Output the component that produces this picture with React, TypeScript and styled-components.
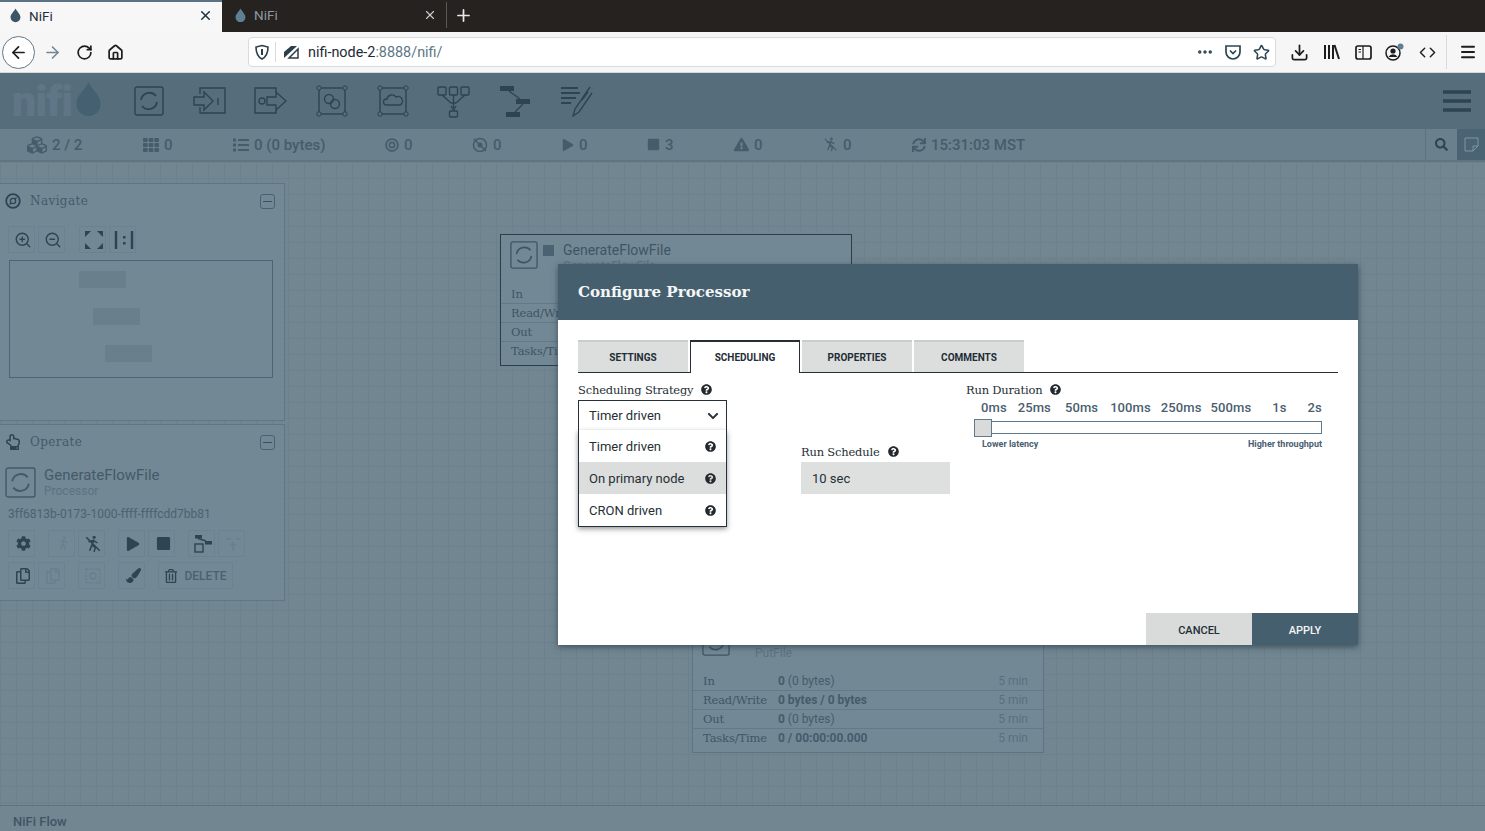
import React from 'react'
import styled, { createGlobalStyle } from 'styled-components'
import {
  ArrowLeft,
  ArrowRight,
  Code,
  Download,
  Ellipsis,
  House,
  Menu,
  Plus,
  RotateCw,
  Star,
  X,
  ZoomIn,
  ZoomOut,
} from 'lucide-react'
import {
  FaBullseye,
  FaChevronDown,
  FaCog,
  FaCubes,
  FaExclamationTriangle,
  FaList,
  FaPaintBrush,
  FaPlay,
  FaQuestionCircle,
  FaRegCopy,
  FaRegHandPointUp,
  FaRegTrashAlt,
  FaSearch,
  FaStop,
  FaSync,
  FaTh,
} from 'react-icons/fa'

const INK = '#2f4351'
const SLAB = '"DejaVu Serif", "Liberation Serif", serif'

const GlobalStyle = createGlobalStyle`
  html, body {
    margin: 0;
    height: 100%;
    overflow: hidden;
    font-family: Roboto, "Liberation Sans", sans-serif;
  }
  #root { height: 100%; }
  * { box-sizing: border-box; }
`

const Page = styled.div`
  position: relative;
  display: flex;
  flex-direction: column;
  width: 1485px;
  height: 831px;
  overflow: hidden;
`

/* browser chrome */
const TabStrip = styled.div`
  display: flex;
  height: 32px;
  flex: none;
  background: #262220;
`
const BrowserTab = styled.div<{ $active?: boolean }>`
  display: flex;
  align-items: center;
  width: ${p => (p.$active ? 222 : 225)}px;
  padding: 0 9px ${p => (p.$active ? 3 : 0)}px ${p => (p.$active ? 10 : 13)}px;
  font-size: 13.5px;
  color: ${p => (p.$active ? '#20303a' : '#8a9aa4')};
  background: ${p => (p.$active ? '#f7f7f8' : 'transparent')};
  border-top: ${p => (p.$active ? '2px solid #5a7282' : 'none')};
  border-right: ${p => (p.$active ? 'none' : '1px solid #5b5755')};
  height: ${p => (p.$active ? 32 : 26)}px;
  margin-top: ${p => (p.$active ? 0 : 2)}px;
`
const TabTitle = styled.span`
  flex: 1;
  margin-left: 8px;
`
const NewTab = styled.div`
  display: flex;
  align-items: center;
  height: 30px;
  padding-left: 7px;
  color: #e8e8e8;
`
const Toolbar = styled.div`
  display: flex;
  align-items: center;
  flex: none;
  height: 41px;
  padding-left: 2px;
  background: #f6f6f7;
  border-bottom: 1px solid #d6d8da;
  color: #1d1d1f;
`
const BackButton = styled.div`
  display: flex;
  align-items: center;
  justify-content: center;
  width: 33px;
  height: 33px;
  border: 1px solid #60788a;
  border-radius: 50%;
  background: #fff;
`
const NavButton = styled.div<{ $width: number; $muted?: boolean }>`
  display: flex;
  align-items: center;
  justify-content: center;
  flex: none;
  width: ${p => p.$width}px;
  color: ${p => (p.$muted ? '#6f8797' : '#1d1d1f')};
`
const UrlBar = styled.div`
  display: flex;
  align-items: center;
  width: 1028px;
  height: 30px;
  margin: 0 7px 0 117px;
  padding-left: 5px;
  background: #fff;
  border: 1px solid #d8dadc;
  border-radius: 4px;
`
const UrlDivider = styled.div`
  width: 1px;
  height: 20px;
  margin: 0 7px 0 5px;
  background: #d8dadc;
`
const UrlText = styled.span`
  flex: 1;
  margin-left: 9px;
  font-size: 14.4px;
  color: #1d2b35;
`
const UrlMuted = styled.span`
  color: #5d7686;
`
const ToolbarSeparator = styled.div`
  width: 1px;
  height: 34px;
  margin: 0 12px 0 3px;
  background: #d8dadc;
`

/* nifi header */
const AppHeader = styled.div`
  display: flex;
  align-items: center;
  flex: none;
  height: 56px;
  padding: 0 14px 0 12px;
  background: #566e7c;
`
const Logo = styled.div`
  display: flex;
  align-items: center;
  gap: 3px;
  width: 122px;
`
const LogoText = styled.span`
  font-size: 43px;
  font-weight: 900;
  line-height: 44px;
  letter-spacing: -0.8px;
  color: #607686;
`
const LogoDrop = styled.div`
  display: flex;
  margin-bottom: 5px;
`
const ComponentButtons = styled.div`
  display: flex;
  align-items: center;
  flex: 1;
  gap: 28.7px;
`
const ToolIcon = styled.div`
  display: flex;
  color: ${INK};
`
const StatusBar = styled.div`
  display: flex;
  align-items: center;
  flex: none;
  height: 33px;
  padding-left: 27px;
  background: #6a808d;
  border-bottom: 2px solid #5f7583;
  font-size: 15px;
  font-weight: 500;
  color: #465c6b;
`
const StatusItem = styled.div<{ $width: number }>`
  display: flex;
  align-items: center;
  gap: 5px;
  flex: none;
  width: ${p => p.$width}px;
`
const StatusSpacer = styled.div`
  flex: 1;
`
const SearchCell = styled.div<{ $dark?: boolean }>`
  display: flex;
  align-items: center;
  justify-content: center;
  height: 100%;
  width: ${p => (p.$dark ? 28 : 32)}px;
  color: ${p => (p.$dark ? '#7f95a3' : INK)};
  background: ${p => (p.$dark ? '#4b6473' : 'transparent')};
  border-left: ${p => (p.$dark ? 'none' : '1px solid #5c7281')};
`

/* canvas */
const Canvas = styled.div`
  position: relative;
  flex: 1;
  background-color: #718691;
  background-image:
    linear-gradient(#6c818c 1px, transparent 1px),
    linear-gradient(90deg, #6c818c 1px, transparent 1px);
  background-size: 16px 16px;
`
const Palettes = styled.div`
  position: absolute;
  left: -1px;
  top: 21px;
  display: flex;
  flex-direction: column;
  gap: 3px;
  width: 286px;
`
const Palette = styled.div<{ $height: number }>`
  height: ${p => p.$height}px;
  padding-left: 6px;
  background: #728894;
  border: 1px solid #5f7685;
  border-left: none;
`
const PaletteHeader = styled.div`
  display: flex;
  align-items: center;
  height: 34px;
  padding-right: 9px;
  color: ${INK};
`
const PaletteTitle = styled.span`
  flex: 1;
  margin-left: 9px;
  font-family: ${SLAB};
  font-size: 12px;
  letter-spacing: 0.4px;
  color: #445a69;
`
const CollapseBox = styled.div`
  display: flex;
  align-items: center;
  justify-content: center;
  width: 15px;
  height: 15px;
  border: 1px solid #4a6171;
  border-radius: 3px;
  &::after {
    content: '';
    width: 9px;
    height: 1px;
    background: #3a4f5d;
  }
`
const ButtonRow = styled.div<{ $top?: number }>`
  display: flex;
  margin: ${p => p.$top ?? 0}px 0 0 3px;
`
const ActionButton = styled.div<{ $gap?: number; $faded?: boolean; $wide?: boolean }>`
  display: flex;
  align-items: center;
  justify-content: center;
  gap: 6px;
  flex: none;
  width: ${p => (p.$wide ? 75 : 27)}px;
  height: 27px;
  margin-left: ${p => p.$gap ?? 3}px;
  padding-left: ${p => (p.$wide ? 0 : 3)}px;
  border: 1px solid #6c8290;
  font-size: 12px;
  font-weight: 500;
  color: ${p => (p.$faded ? '#66808f' : INK)};
  &:first-child { margin-left: 0; }
`
const ButtonLabel = styled.span`
  color: #4b6171;
`
const Birdseye = styled.div`
  display: flex;
  flex-direction: column;
  gap: 20px;
  width: 264px;
  height: 118px;
  margin: 7px 0 0 4px;
  padding-top: 10px;
  border: 1px solid #4d6474;
`
const BirdseyeNode = styled.div<{ $left: number }>`
  width: 47px;
  height: 17px;
  margin-left: ${p => p.$left}px;
  background: #697f8c;
`
const SelectionRow = styled.div`
  display: flex;
  align-items: center;
  gap: 8px;
  height: 32px;
  margin-top: 7px;
  color: #445a69;
`
const SelectionName = styled.div`
  font-size: 15px;
  line-height: 17px;
`
const SelectionType = styled.div`
  font-size: 12px;
  line-height: 14px;
  color: #5b7282;
`
const SelectionId = styled.div`
  margin: 9px 0 9px 3px;
  font-size: 12px;
  line-height: 14px;
  color: #4c6272;
`
const FlowNode = styled.div<{ $left: number; $top: number; $selected?: boolean }>`
  position: absolute;
  left: ${p => p.$left}px;
  top: ${p => p.$top}px;
  width: 352px;
  height: 132px;
  padding-top: 6px;
  background: #738895;
  border: 1px solid ${p => (p.$selected ? '#2a3d4a' : '#5d7484')};
  color: #3f5564;
`
const NodeHead = styled.div`
  display: flex;
  height: 43.5px;
  padding-left: 9px;
`
const StopMark = styled.div`
  width: 11px;
  height: 11px;
  margin: 4px 9px 0 5px;
  background: #4a6272;
`
const NodeName = styled.div`
  padding-top: 1px;
  font-size: 14px;
  line-height: 17px;
`
const NodeSub = styled.div`
  font-size: 12px;
  line-height: 14px;
  color: #5b7282;
`
const StatRow = styled.div<{ $rule?: boolean }>`
  display: flex;
  align-items: center;
  height: 19px;
  margin-top: -0.25px;
  padding: 0 15px 0 10px;
  border-top: ${p => (p.$rule ? '1px solid #62798a' : '1px solid transparent')};
  font-size: 12px;
`
const StatLabel = styled.span`
  width: 75px;
  font-family: ${SLAB};
  font-size: 11.5px;
  letter-spacing: -0.15px;
  white-space: nowrap;
`
const StatValue = styled.span`
  flex: 1;
  color: #455b6a;
`
const StatTime = styled.span`
  color: #577080;
`
const Strong = styled.b`
  font-weight: 700;
`
const Footer = styled.div`
  display: flex;
  align-items: flex-end;
  flex: none;
  height: 26px;
  padding: 0 0 2px 13px;
  background: #718691;
  border-top: 1px solid #5d7484;
  font-size: 13px;
  font-weight: 500;
  color: #3f5564;
`

/* dialog */
const Dialog = styled.div`
  position: absolute;
  left: 558px;
  top: 264px;
  display: flex;
  flex-direction: column;
  width: 800px;
  height: 381px;
  background: #fff;
  box-shadow: 0 2px 6px rgba(40, 60, 72, 0.7);
`
const DialogHeader = styled.div`
  display: flex;
  align-items: center;
  flex: none;
  height: 56px;
  padding-left: 20px;
  background: #455f6e;
  font-family: ${SLAB};
  font-size: 15.1px;
  font-weight: 700;
  color: #f4f6f7;
`
const DialogBody = styled.div`
  flex: 1;
  padding: 20px 20px 0;
`
const Tabs = styled.div`
  display: flex;
  gap: 2px;
  height: 33px;
  border-bottom: 1px solid #262f35;
`
const DialogTab = styled.div<{ $active?: boolean }>`
  display: flex;
  align-items: center;
  justify-content: center;
  width: 110px;
  height: ${p => (p.$active ? 33 : 32)}px;
  font-size: 10px;
  font-weight: 700;
  color: #1f2d36;
  background: ${p => (p.$active ? '#fff' : '#dcdddd')};
  border-top: 2px solid ${p => (p.$active ? '#262f35' : '#c9cbcc')};
  border-left: ${p => (p.$active ? '1px solid #262f35' : 'none')};
  border-right: ${p => (p.$active ? '1px solid #262f35' : 'none')};
`
const FormGrid = styled.div`
  display: grid;
  grid-template-columns: 223px 165px 356px;
  margin-top: 9px;
`
const Label = styled.div`
  display: flex;
  align-items: center;
  gap: 8px;
  height: 15px;
  font-family: ${SLAB};
  font-size: 11.5px;
  letter-spacing: -0.2px;
  color: #262f35;
`
const Help = styled(FaQuestionCircle)`
  flex: none;
  font-size: 11px;
  color: #23292e;
`
const SelectWrap = styled.div`
  position: relative;
  width: 149px;
  margin-top: 3px;
`
const SelectBox = styled.div`
  display: flex;
  align-items: center;
  justify-content: space-between;
  height: 31px;
  padding: 0 7px 0 10px;
  background: #fff;
  border: 1px solid #262f35;
  border-bottom-color: #e4e5e5;
  font-size: 13px;
  color: #262f35;
`
const Options = styled.div`
  position: absolute;
  left: 0;
  right: 0;
  top: 30px;
  background: #fff;
  border: 1px solid #262f35;
  border-top: none;
  box-shadow: 0 2px 5px rgba(60, 70, 76, 0.55);
`
const Option = styled.div<{ $hot?: boolean }>`
  display: flex;
  align-items: center;
  justify-content: space-between;
  height: 32px;
  padding: 0 10px;
  font-size: 13px;
  color: #262f35;
  background: ${p => (p.$hot ? '#dcdddd' : '#fff')};
`
const ScheduleColumn = styled.div`
  padding-top: 62px;
`
const ScheduleInput = styled.div`
  display: flex;
  align-items: center;
  width: 149px;
  height: 32px;
  margin-top: 3px;
  padding-left: 11px;
  background: #dedfdf;
  font-size: 13px;
  color: #262f35;
`
const TickRow = styled.div`
  display: flex;
  margin-top: 3px;
  padding-left: 15px;
  font-size: 13px;
  letter-spacing: 0.1px;
  font-weight: 500;
  color: #4a6070;
`
const Tick = styled.span<{ $gap: number }>`
  margin-left: ${p => p.$gap}px;
`
const Track = styled.div`
  position: relative;
  width: 348px;
  height: 13px;
  margin: 6px 0 0 8px;
  border: 1px solid #5f7a8b;
  background: #fff;
`
const Handle = styled.div`
  position: absolute;
  left: -1px;
  top: -3px;
  width: 18px;
  height: 18px;
  background: #d9dada;
  border: 1px solid #5f7a8b;
`
const Ends = styled.div`
  display: flex;
  justify-content: space-between;
  margin: 5px 0 0 16px;
  font-size: 9px;
  font-weight: 700;
  color: #4a6070;
`
const DialogActions = styled.div`
  display: flex;
  justify-content: flex-end;
  flex: none;
`
const ActionBtn = styled.div<{ $primary?: boolean }>`
  display: flex;
  align-items: center;
  justify-content: center;
  width: 106px;
  height: 32px;
  padding-top: 2px;
  font-size: 11px;
  font-weight: 500;
  color: ${p => (p.$primary ? '#f4f6f7' : '#1f2d36')};
  background: ${p => (p.$primary ? '#455f6e' : '#d9dada')};
`

/* drawings */
const Line = { fill: 'none', stroke: 'currentColor', strokeWidth: 1.4 }

const Drop = ({ size, color }: { size: number; color: string }) => (
  <svg width={size} height={size * 1.3} viewBox="0 0 20 26">
    <path d="M10 1 C13 7 19 11 19 17 A9 9 0 0 1 1 17 C1 11 7 7 10 1 Z" fill={color} />
  </svg>
)

const ProcessorGlyph = ({ size = 30 }: { size?: number }) => (
  <svg width={size} height={size} viewBox="0 0 30 30" style={{ flex: 'none' }}>
    <rect x="1" y="1" width="28" height="28" rx="2" {...Line} />
    <path d="M7 14 A8.5 8.5 0 0 1 22 10 M23 16 A8.5 8.5 0 0 1 8 20" {...Line} strokeWidth={1.8} />
  </svg>
)

const InputGlyph = () => (
  <svg width="33" height="30" viewBox="0 0 33 30" color={INK}>
    <path d="M7 8 V2 H32 V27 H7 V21" {...Line} />
    <path d="M1 11 H11 V6 L20 15 L11 24 V19 H1 Z" {...Line} />
    <path d="M25 12 V19" {...Line} />
  </svg>
)
const OutputGlyph = () => (
  <svg width="33" height="30" viewBox="0 0 33 30" color={INK}>
    <path d="M22 6 V2 H1 V27 H22 V24" {...Line} />
    <circle cx="8" cy="15" r="3" {...Line} />
    <path d="M13 11 H22 V6 L32 15 L22 24 V19 H13 Z" {...Line} />
  </svg>
)
const GroupFrame = ({ children }: { children: React.ReactNode }) => (
  <svg width="32" height="32" viewBox="0 0 32 32" color={INK}>
    <rect x="3" y="3" width="26" height="26" {...Line} />
    {[3, 29].map(x =>
      [3, 29].map(y => <circle key={`${x}${y}`} cx={x} cy={y} r="2.2" fill="#566e7c" stroke="currentColor" />),
    )}
    {children}
  </svg>
)
const FunnelGlyph = () => (
  <svg width="33" height="33" viewBox="0 0 33 33" color={INK}>
    <rect x="1" y="2" width="8" height="8" rx="1" {...Line} />
    <rect x="12.5" y="2" width="8" height="8" rx="1" {...Line} />
    <rect x="24" y="2" width="8" height="8" rx="1" {...Line} />
    <path d="M5 10 L14 18 M16.5 10 V23 M28 10 L19 18 M14 18 H19 M14 21 L16.5 25 L19 21" {...Line} />
    <rect x="12.5" y="26" width="8" height="6" rx="1" {...Line} />
  </svg>
)
const TemplateGlyph = () => (
  <svg width="32" height="34" viewBox="0 0 32 34" color={INK}>
    <rect x="1" y="2" width="14" height="5" fill="currentColor" />
    <rect x="17" y="15" width="14" height="5" fill="currentColor" />
    <rect x="7" y="28" width="14" height="5" fill="currentColor" />
    <path d="M10 7 L21 15 M24 20 L16 28" {...Line} />
  </svg>
)
const LabelGlyph = () => (
  <svg width="33" height="32" viewBox="0 0 33 32" color={INK}>
    <path d="M1 3 H18 M1 8 H20 M1 13 H16 M1 18 H11" {...Line} strokeWidth={1.8} />
    <path d="M30 2 L15 24 L13 31 L19 27 L32 8 M22 15 L28 7" {...Line} />
  </svg>
)
const BurgerGlyph = () => (
  <svg width="28" height="24" viewBox="0 0 28 24" color={INK}>
    <path d="M0 3 H28 M0 12 H28 M0 21 H28" fill="none" stroke="currentColor" strokeWidth="3.4" />
  </svg>
)
const FitGlyph = () => (
  <svg width="20" height="20" viewBox="0 0 20 20" color={INK}>
    <path d="M1 7 V1 H7 Z M13 1 H19 V7 Z M1 13 V19 H7 Z M19 13 V19 H13 Z" fill="currentColor" />
  </svg>
)
const OneToOneGlyph = () => (
  <svg width="20" height="20" viewBox="0 0 20 20" color={INK}>
    <path d="M2 1 V19 M18 1 V19" stroke="currentColor" strokeWidth="2.4" />
    <rect x="9" y="6" width="2.5" height="2.5" fill="currentColor" />
    <rect x="9" y="12" width="2.5" height="2.5" fill="currentColor" />
  </svg>
)
const CompassGlyph = () => (
  <svg width="16" height="16" viewBox="0 0 16 16">
    <circle cx="8" cy="8" r="6.8" fill="none" stroke="currentColor" strokeWidth="1.8" />
    <circle cx="8" cy="8" r="2.6" fill="none" stroke="currentColor" strokeWidth="1.3" />
    <path d="M10 6 L11.5 4.5 M6 10 L4.5 11.5" stroke="currentColor" strokeWidth="1.2" />
  </svg>
)
const NotTransmitting = () => (
  <svg width="16" height="16" viewBox="0 0 16 16">
    <circle cx="8" cy="8" r="6.5" fill="none" stroke="currentColor" strokeWidth="1.6" />
    <circle cx="8" cy="8" r="2.5" fill="currentColor" />
    <path d="M2 2 L14 14" stroke="currentColor" strokeWidth="1.6" />
  </svg>
)
const RunnerOff = ({ size = 15, faded }: { size?: number; faded?: boolean }) => (
  <svg width={size} height={size} viewBox="0 0 16 16" color={faded ? '#66808f' : undefined}>
    <circle cx="9" cy="2" r="1.4" fill="currentColor" />
    <path d="M9 4 L7 9 L10 11 L9 15 M7 9 L5 14 M8 5 L12 7 M8 5 L4 6" {...Line} />
    {!faded && <path d="M2 2 L14 14" {...Line} />}
  </svg>
)
const TemplateSave = () => (
  <svg width="19" height="19" viewBox="0 0 19 19" color={INK}>
    <rect x="1" y="1" width="7" height="3.5" fill="currentColor" />
    <rect x="11" y="7" width="7" height="3.5" fill="currentColor" />
    <rect x="1" y="10" width="8" height="8" {...Line} />
    <path d="M4 4.5 L12 7" {...Line} />
  </svg>
)
const TemplateUpload = () => (
  <svg width="19" height="19" viewBox="0 0 19 19" color="#66808f">
    <path d="M9 17 V9 M6 12 L9 9 L12 12 M2 5 H7 M12 5 H17" {...Line} />
  </svg>
)
const GroupBox = () => (
  <svg width="18" height="18" viewBox="0 0 18 18" color="#66808f">
    <rect x="2" y="2" width="14" height="14" {...Line} strokeDasharray="2 1" />
    <circle cx="9" cy="9" r="3" {...Line} />
  </svg>
)
const FirefoxIcon = { Shield: () => (
  <svg width="16" height="16" viewBox="0 0 16 16">
    <path d="M8 1.5 L14 3 C14 9 12 13 8 15 C4 13 2 9 2 3 Z" fill="none" stroke="#2c3e4a" strokeWidth="1.6" />
    <path d="M8 5 V11" stroke="#2c3e4a" strokeWidth="2" />
  </svg>
), Insecure: () => (
  <svg width="16" height="16" viewBox="0 0 16 16">
    <path d="M1 8 L8 2 H14 L1 14 Z" fill="#2c3e4a" />
    <path d="M6 14 H15 V5 Z" fill="none" stroke="#2c3e4a" strokeWidth="1.5" />
  </svg>
), Pocket: () => (
  <svg width="18" height="18" viewBox="0 0 18 18">
    <path d="M2 3 H16 V9 A7 7 0 0 1 2 9 Z" fill="none" stroke="#2c4655" strokeWidth="1.7" />
    <path d="M6 7.5 L9 10.5 L12 7.5" fill="none" stroke="#2c4655" strokeWidth="1.7" />
  </svg>
), Library: () => (
  <svg width="17" height="16" viewBox="0 0 17 16">
    <path d="M2 1 V15 M6 1 V15 M10 1 V15 M11.5 1 L16 15" stroke="#1d1d1f" strokeWidth="2" />
  </svg>
), Sidebar: () => (
  <svg width="17" height="15" viewBox="0 0 17 15">
    <rect x="1" y="1" width="15" height="13" rx="2" fill="none" stroke="#1d1d1f" strokeWidth="1.7" />
    <path d="M8 1 V14 M3.5 4.5 H6 M3.5 7 H6" stroke="#1d1d1f" strokeWidth="1.2" />
  </svg>
), Account: () => (
  <svg width="20" height="19" viewBox="0 0 20 19">
    <circle cx="8" cy="10" r="7" fill="none" stroke="#1d1d1f" strokeWidth="1.5" />
    <circle cx="8" cy="8" r="2.6" fill="#1d1d1f" />
    <path d="M3.5 14 A5 5 0 0 1 12.5 14 Z" fill="#1d1d1f" />
    <circle cx="15.5" cy="3.5" r="3" fill="#5f7f94" />
  </svg>
) }

const TabDrop = ({ muted }: { muted?: boolean }) => <Drop size={11} color={muted ? '#5f7f94' : '#3b5667'} />

const statusWidths = [116, 90, 152, 87, 90, 85, 87, 89, 89]

const ticks: [string, number][] = [
  ['0ms', 0],
  ['25ms', 11],
  ['50ms', 14],
  ['100ms', 12],
  ['250ms', 10],
  ['500ms', 9],
  ['1s', 21],
  ['2s', 21],
]

export default function App() {
  return (
    <Page>
      <GlobalStyle />
      <TabStrip>
        <BrowserTab $active>
          <TabDrop />
          <TabTitle>NiFi</TabTitle>
          <X size={15} strokeWidth={2.4} color="#20303a" />
        </BrowserTab>
        <BrowserTab>
          <TabDrop muted />
          <TabTitle>NiFi</TabTitle>
          <X size={14} strokeWidth={2} color="#c8cdd0" />
        </BrowserTab>
        <NewTab>
          <Plus size={19} strokeWidth={2.2} />
        </NewTab>
      </TabStrip>

      <Toolbar>
        <BackButton>
          <ArrowLeft size={19} strokeWidth={2.2} />
        </BackButton>
        <NavButton $width={34} $muted>
          <ArrowRight size={19} />
        </NavButton>
        <NavButton $width={31}>
          <RotateCw size={17} strokeWidth={2.4} />
        </NavButton>
        <NavButton $width={31}>
          <House size={17} strokeWidth={2.4} />
        </NavButton>
        <UrlBar>
          <FirefoxIcon.Shield />
          <UrlDivider />
          <FirefoxIcon.Insecure />
          <UrlText>
            nifi-node-2<UrlMuted>:8888/nifi/</UrlMuted>
          </UrlText>
          <NavButton $width={28}>
            <Ellipsis size={18} strokeWidth={2.6} color="#2c4655" />
          </NavButton>
          <NavButton $width={28}>
            <FirefoxIcon.Pocket />
          </NavButton>
          <NavButton $width={28}>
            <Star size={17} strokeWidth={2.2} color="#2c4655" />
          </NavButton>
        </UrlBar>
        <NavButton $width={32}>
          <Download size={19} strokeWidth={2.2} />
        </NavButton>
        <NavButton $width={32}>
          <FirefoxIcon.Library />
        </NavButton>
        <NavButton $width={32}>
          <FirefoxIcon.Sidebar />
        </NavButton>
        <NavButton $width={32}>
          <FirefoxIcon.Account />
        </NavButton>
        <NavButton $width={32}>
          <Code size={17} />
        </NavButton>
        <ToolbarSeparator />
        <Menu size={18} strokeWidth={2.6} />
      </Toolbar>

      <AppHeader>
        <Logo>
          <LogoText>nifi</LogoText>
          <LogoDrop>
            <Drop size={27} color="#456070" />
          </LogoDrop>
        </Logo>
        <ComponentButtons>
          <ToolIcon>
            <ProcessorGlyph />
          </ToolIcon>
          <InputGlyph />
          <OutputGlyph />
          <GroupFrame>
            <circle cx="13" cy="14" r="4.5" {...Line} />
            <circle cx="19" cy="19" r="4.5" {...Line} />
          </GroupFrame>
          <GroupFrame>
            <path d="M9 20 A3 3 0 0 1 10 14 A5 5 0 0 1 19 12 A4 4 0 0 1 23 20 Z" {...Line} />
          </GroupFrame>
          <FunnelGlyph />
          <TemplateGlyph />
          <LabelGlyph />
        </ComponentButtons>
        <BurgerGlyph />
      </AppHeader>

      <StatusBar>
        {[
          [<FaCubes size={20} key="i" />, '2 / 2'],
          [<FaTh size={16} key="i" />, '0'],
          [<FaList size={16} key="i" />, '0 (0 bytes)'],
          [<FaBullseye size={14} key="i" />, '0'],
          [<NotTransmitting key="i" />, '0'],
          [<FaPlay size={12} key="i" />, '0'],
          [<FaStop size={13} key="i" />, '3'],
          [<FaExclamationTriangle size={15} key="i" />, '0'],
          [<RunnerOff key="i" />, '0'],
        ].map(([icon, text], i) => (
          <StatusItem $width={statusWidths[i]} key={i}>
            {icon}
            {text}
          </StatusItem>
        ))}
        <StatusItem $width={200}>
          <FaSync size={14} />
          15:31:03 MST
        </StatusItem>
        <StatusSpacer />
        <SearchCell>
          <FaSearch size={13} />
        </SearchCell>
        <SearchCell $dark>
          <svg width="15" height="15" viewBox="0 0 15 15">
            <path d="M1 1 H14 V9 L9 14 H1 Z M9 14 V9 H14" fill="none" stroke="currentColor" />
          </svg>
        </SearchCell>
      </StatusBar>

      <Canvas>
        <FlowNode $left={500} $top={72} $selected>
          <NodeHead>
            <ProcessorGlyph size={28} />
            <StopMark />
            <div>
              <NodeName>GenerateFlowFile</NodeName>
              <NodeSub>GenerateFlowFile</NodeSub>
            </div>
          </NodeHead>
          <StatRow><StatLabel>In</StatLabel></StatRow>
          <StatRow $rule><StatLabel>Read/Write</StatLabel></StatRow>
          <StatRow $rule><StatLabel>Out</StatLabel></StatRow>
          <StatRow $rule><StatLabel>Tasks/Time</StatLabel></StatRow>
        </FlowNode>

        <FlowNode $left={692} $top={459}>
          <NodeHead>
            <ProcessorGlyph size={28} />
            <StopMark />
            <div>
              <NodeName>PutFile</NodeName>
              <NodeSub>PutFile</NodeSub>
            </div>
          </NodeHead>
          <StatRow>
            <StatLabel>In</StatLabel>
            <StatValue><Strong>0</Strong> (0 bytes)</StatValue>
            <StatTime>5 min</StatTime>
          </StatRow>
          <StatRow $rule>
            <StatLabel>Read/Write</StatLabel>
            <StatValue><Strong>0 bytes / 0 bytes</Strong></StatValue>
            <StatTime>5 min</StatTime>
          </StatRow>
          <StatRow $rule>
            <StatLabel>Out</StatLabel>
            <StatValue><Strong>0</Strong> (0 bytes)</StatValue>
            <StatTime>5 min</StatTime>
          </StatRow>
          <StatRow $rule>
            <StatLabel>Tasks/Time</StatLabel>
            <StatValue><Strong>0 / 00:00:00.000</Strong></StatValue>
            <StatTime>5 min</StatTime>
          </StatRow>
        </FlowNode>

        <Palettes>
          <Palette $height={238}>
            <PaletteHeader>
              <CompassGlyph />
              <PaletteTitle>Navigate</PaletteTitle>
              <CollapseBox />
            </PaletteHeader>
            <ButtonRow $top={8}>
              <ActionButton><ZoomIn size={18} strokeWidth={1.8} /></ActionButton>
              <ActionButton><ZoomOut size={18} strokeWidth={1.8} /></ActionButton>
              <ActionButton $gap={14}><FitGlyph /></ActionButton>
              <ActionButton><OneToOneGlyph /></ActionButton>
            </ButtonRow>
            <Birdseye>
              <BirdseyeNode $left={69} />
              <BirdseyeNode $left={83} />
              <BirdseyeNode $left={95} />
            </Birdseye>
          </Palette>
          <Palette $height={177}>
            <PaletteHeader>
              <FaRegHandPointUp size={16} />
              <PaletteTitle>Operate</PaletteTitle>
              <CollapseBox />
            </PaletteHeader>
            <SelectionRow>
              <ProcessorGlyph size={31} />
              <div>
                <SelectionName>GenerateFlowFile</SelectionName>
                <SelectionType>Processor</SelectionType>
              </div>
            </SelectionRow>
            <SelectionId>3ff6813b-0173-1000-ffff-ffffcdd7bb81</SelectionId>
            <ButtonRow>
              <ActionButton><FaCog size={15} /></ActionButton>
              <ActionButton $gap={13} $faded><RunnerOff faded /></ActionButton>
              <ActionButton><RunnerOff size={18} /></ActionButton>
              <ActionButton $gap={13}><FaPlay size={14} /></ActionButton>
              <ActionButton><FaStop size={15} /></ActionButton>
              <ActionButton $gap={13}><TemplateSave /></ActionButton>
              <ActionButton $faded><TemplateUpload /></ActionButton>
            </ButtonRow>
            <ButtonRow $top={5}>
              <ActionButton><FaRegCopy size={16} /></ActionButton>
              <ActionButton $faded><FaRegCopy size={16} /></ActionButton>
              <ActionButton $gap={13} $faded><GroupBox /></ActionButton>
              <ActionButton $gap={13}><FaPaintBrush size={15} /></ActionButton>
              <ActionButton $gap={13} $wide>
                <FaRegTrashAlt size={14} />
                <ButtonLabel>DELETE</ButtonLabel>
              </ActionButton>
            </ButtonRow>
          </Palette>
        </Palettes>
      </Canvas>

      <Footer>NiFi Flow</Footer>

      <Dialog>
        <DialogHeader>Configure Processor</DialogHeader>
        <DialogBody>
          <Tabs>
            <DialogTab>SETTINGS</DialogTab>
            <DialogTab $active>SCHEDULING</DialogTab>
            <DialogTab>PROPERTIES</DialogTab>
            <DialogTab>COMMENTS</DialogTab>
          </Tabs>
          <FormGrid>
            <div>
              <Label>Scheduling Strategy <Help /></Label>
              <SelectWrap>
                <SelectBox>
                  Timer driven
                  <FaChevronDown size={12} />
                </SelectBox>
                <Options>
                  <Option>Timer driven <Help /></Option>
                  <Option $hot>On primary node <Help /></Option>
                  <Option>CRON driven <Help /></Option>
                </Options>
              </SelectWrap>
            </div>
            <ScheduleColumn>
              <Label>Run Schedule <Help /></Label>
              <ScheduleInput>10 sec</ScheduleInput>
            </ScheduleColumn>
            <div>
              <Label>Run Duration <Help /></Label>
              <TickRow>
                {ticks.map(([t, gap]) => (
                  <Tick $gap={gap} key={t}>{t}</Tick>
                ))}
              </TickRow>
              <Track>
                <Handle />
              </Track>
              <Ends>
                <span>Lower latency</span>
                <span>Higher throughput</span>
              </Ends>
            </div>
          </FormGrid>
        </DialogBody>
        <DialogActions>
          <ActionBtn>CANCEL</ActionBtn>
          <ActionBtn $primary>APPLY</ActionBtn>
        </DialogActions>
      </Dialog>
    </Page>
  )
}
